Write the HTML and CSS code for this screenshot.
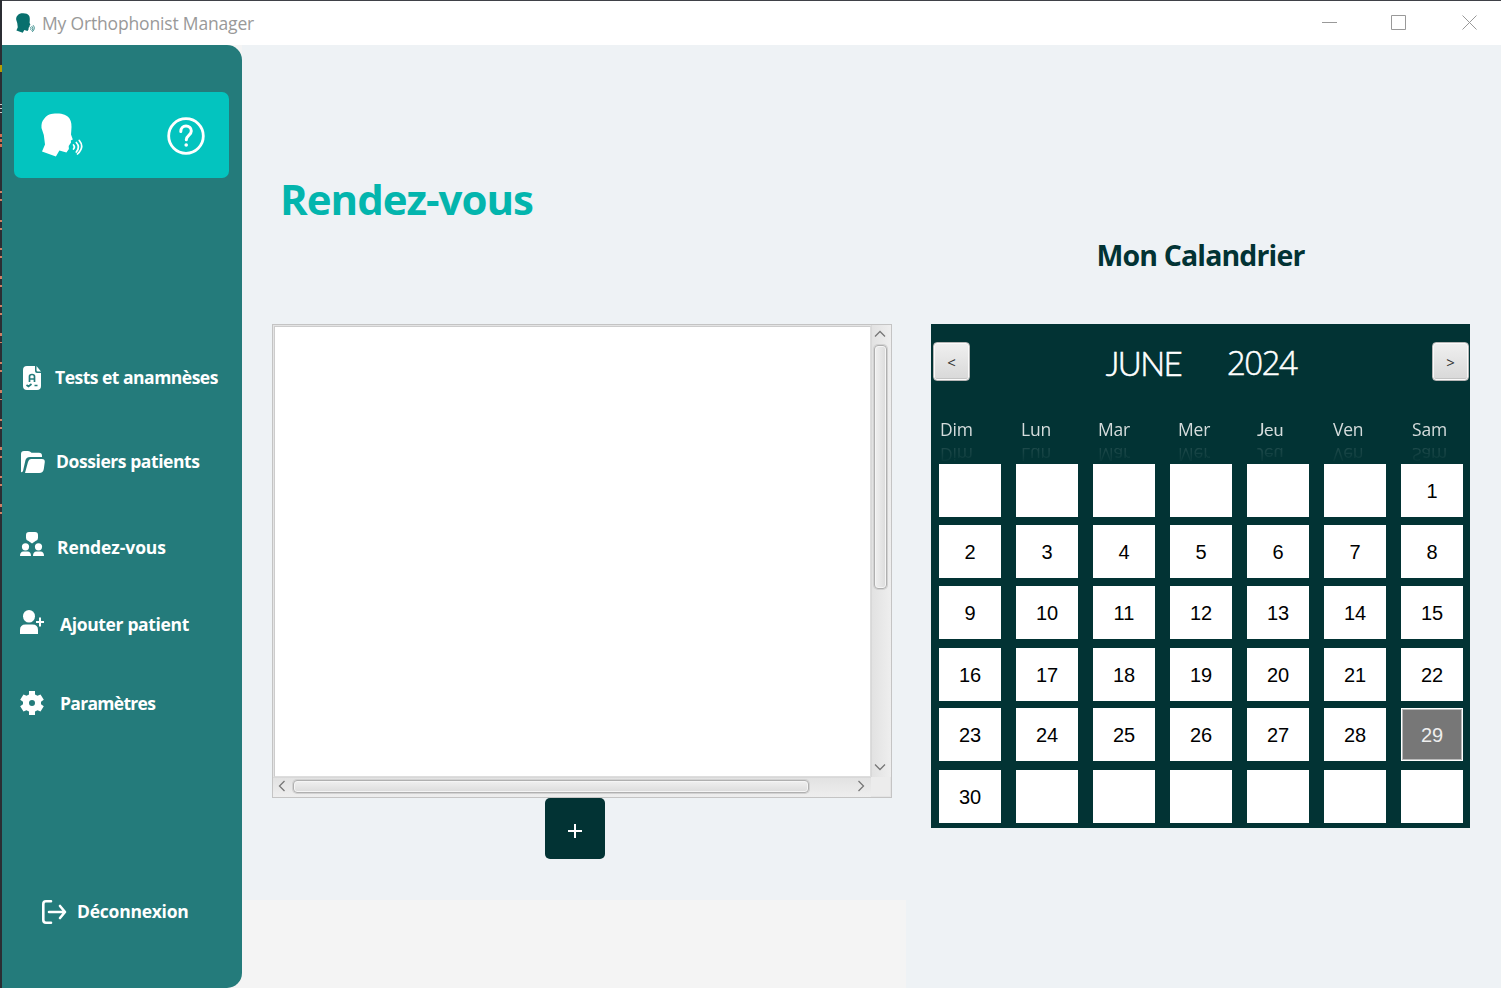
FILE: index.html
```html
<!DOCTYPE html>
<html lang="fr">
<head>
<meta charset="utf-8">
<title>My Orthophonist Manager</title>
<link rel="stylesheet" href="styles.css">
</head>
<body>
<svg class="defs" width="0" height="0" aria-hidden="true">
  <symbol id="head" viewBox="0 0 42 44">
    <path fill="currentColor" d="M3 6C6 1.500 10 .5 16 .5c6 0 10 1.500 12.500 5 2 3 2.300 7 1.800 12l-.3 4 1.800 5-2 1 .2 2-1.600 2.500-.7 1 .2 3-2.500 3.500-7-2-3.500 6L1 38.500l3-7L2.800 22 .5 15C.2 11 1 8 3 6z"/>
    <g fill="none" stroke="currentColor" stroke-width="1.700" stroke-linecap="round"><path d="M32.500 32q1.800 2 0 4"/><path d="M35.300 29.500q4.200 4.500 0 9.500"/><path d="M38.300 27.500q5.600 6.500 -1.800 13.500"/></g>
  </symbol>
</svg>
<div class="desktop-edge"><i></i><i></i><i></i><i></i></div>
<div class="window">
  <header class="titlebar">
    <svg class="app-icon"><use href="#head"/></svg>
    <span class="app-name">My Orthophonist Manager</span>
    <svg class="controls" width="156" height="16" viewBox="0 0 156 16" fill="none" stroke="#999"><path d="M0 7.500h15M69.500.5h14v14h-14z"/><path d="M140.500.5l14 14M154.500.5l-14 14"/></svg>
  </header>
  <div class="body">
    <nav class="sidebar">
      <div class="brand">
        <svg class="brand-head"><use href="#head"/></svg>
        <svg class="help" viewBox="0 0 38 38" fill="none" stroke="#fff" stroke-linecap="round"><circle cx="19" cy="19" r="17.300" stroke-width="2.800"/><path stroke-width="3" d="M13.800 14.500c0-3.300 2.200-5.500 5.200-5.500s5.300 2.200 5.300 5c0 4.500-5 4.300-5 8.800"/><circle cx="19.200" cy="28" r="1.800" fill="#fff" stroke="none"/></svg>
      </div>
      <a class="item tests"><svg viewBox="0 0 24 24"><path fill="#fff" d="M7 0h8v5q0 2 2 2h4v13q0 4-4 4H7q-4 0-4-4V4q0-4 4-4zM16.500 0L21 5.500h-3q-1.500 0-1.500-1.500z"/><path fill="none" stroke="#247b7b" stroke-width="1.700" d="M9.500 16v-5.500q0-2 2.500-2t2.500 2V16M9.500 13h5M6.500 19l2 1.500 3-2.500M14.500 19.500h3"/></svg><span>Tests et anamnèses</span></a>
      <a class="item files"><svg viewBox="0 0 24 24"><path fill="#fff" d="M1 22V4q0-3 3-3h4q2 0 3.500 1.800H19q3 0 3 3V7H10Q6.500 7 5.500 10L3 21q-.5 1.500-2 1z"/><path fill="#fff" d="M11 9h11q3 0 2.800 3l-1 7q-.6 4-4.500 4H5l3-11q.8-3 3-3z"/></svg><span>Dossiers patients</span></a>
      <a class="item meets"><svg viewBox="0 0 24 24" fill="#fff"><path d="M9 0h6q3 0 3 3v3q0 2.500-2.500 3L12 11.500 8.500 9Q6 8.500 6 6V3q0-3 3-3z"/><circle cx="5.500" cy="14.800" r="3.600"/><circle cx="18.500" cy="14.800" r="3.600"/><path d="M0 24q0-4.500 3.500-4.500h4Q11 19.500 11 24zM13 24q0-4.500 3.500-4.500h4Q24 19.500 24 24z"/></svg><span>Rendez-vous</span></a>
      <a class="item add"><svg viewBox="0 0 24 24" fill="#fff"><ellipse cx="9" cy="6.300" rx="6" ry="6.300"/><path d="M0 24v-4q0-5.500 5.500-5.500h7Q18 14.500 18 20v4zM19 7.500h2V11h3v2h-3v3.500h-2V13h-3v-2h3z"/></svg><span>Ajouter patient</span></a>
      <a class="item settings"><svg viewBox="0 0 24 24"><path fill="#fff" fill-rule="evenodd" d="M9 0h6v3.500l2.500 1.300 3-1.300 3.300 5.200L21 10.800v2.400l2.800 2.100-3.300 5.200-3-1.300L15 20.500V24H9v-3.500l-2.500-1.300-3 1.300-3.300-5.200L3 13.200v-2.400L.2 8.700l3.300-5.200 3 1.300L9 3.500zM12 9a3 3 0 1 0 0 6 3 3 0 0 0 0-6z"/></svg><span>Paramètres</span></a>
      <a class="item logout"><svg viewBox="0 0 24 24" fill="none" stroke="#fff" stroke-width="2.600" stroke-linecap="round" stroke-linejoin="round"><path d="M9 1.300H4Q1.300 1.300 1.300 4v16q0 2.700 2.700 2.700h5"/><path stroke-width="2.600" d="M7 12h15.500M18 6l5 6-5 6"/></svg><span>Déconnexion</span></a>
    </nav>
    <main class="main">
      <section class="agenda">
        <div class="agenda-top">
          <h1><span>Rendez-vous</span></h1>
          <div class="list">
            <div class="view"></div>
            <div class="vbar"><svg viewBox="0 0 12 8"><path d="M1 6.500L6 1.500l5 5"/></svg><div class="thumb"></div><svg class="end" viewBox="0 0 12 8"><path d="M1 1.500l5 5 5-5"/></svg></div>
            <div class="hbar"><svg viewBox="0 0 8 12"><path d="M6.500 1L1.500 6l5 5"/></svg><div class="thumb"></div><svg class="end" viewBox="0 0 8 12"><path d="M1.500 1l5 5-5 5"/></svg></div>
            <div class="corner"></div>
          </div>
          <button class="plus"><svg width="14" height="14" viewBox="0 0 14 14"><path fill="#fff" d="M6 0h2v6h6v2H8v6H6V8H0V6h6z"/></svg></button>
        </div>
      </section>
      <section class="calendar-side">
        <h2><span>Mon Calandrier</span></h2>
        <div class="calendar">
          <div class="cal-head"><button>&lt;</button><p><span class="month">JUNE</span><span class="year">2024</span></p><button>&gt;</button></div>
          <div class="days"><span>Dim</span><span>Lun</span><span>Mar</span><span>Mer</span><span>Jeu</span><span>Ven</span><span>Sam</span></div>
          <div class="grid">
            <b></b><b></b><b></b><b></b><b></b><b></b><b>1</b>
            <b>2</b><b>3</b><b>4</b><b>5</b><b>6</b><b>7</b><b>8</b>
            <b>9</b><b>10</b><b>11</b><b>12</b><b>13</b><b>14</b><b>15</b>
            <b>16</b><b>17</b><b>18</b><b>19</b><b>20</b><b>21</b><b>22</b>
            <b>23</b><b>24</b><b>25</b><b>26</b><b>27</b><b>28</b><b class="today">29</b>
            <b>30</b><b></b><b></b><b></b><b></b><b></b><b></b>
          </div>
        </div>
      </section>
    </main>
  </div>
</div>
</body>
</html>
```
FILE: styles.css
```css
* { box-sizing: border-box; }
body { margin: 0; width: 1501px; height: 988px; display: flex; overflow: hidden; font-family: "Open Sans", "Noto Sans", sans-serif; background: #eef2f5; }
.defs { position: absolute; }
.desktop-edge { width: 2px; flex: none; background: #2b2d33; display: flex; flex-direction: column; }
.desktop-edge i { flex: none; width: 2px; }
.desktop-edge i:nth-child(1) { height: 7px; margin-top: 65px; background: #b89b00; }
.desktop-edge i:nth-child(2) { height: 12px; margin-top: 32px; background: repeating-linear-gradient(#c8c8c8 0 1px, #2b2d33 1px 4px); }
.desktop-edge i:nth-child(3) { height: 14px; margin-top: 18px; background: repeating-linear-gradient(#cf6f51 0 3px, #2b2d33 3px 5px); }
.desktop-edge i:nth-child(4) { height: 330px; margin-top: 43px; background: repeating-linear-gradient(#cf7f64 0 2px, #2b2d33 2px 8px, #cf7f64 8px 10px, #2b2d33 10px 28.500px); }
.window { flex: 1; display: flex; flex-direction: column; }
.titlebar { height: 45px; flex: none; background: #fff; border-top: 1px solid #3f4147; display: flex; align-items: center; padding: 0 23px 0 13px; color: #999; }
.app-icon { width: 21px; height: 20px; margin-top: -1px; color: #08706e; }
.app-name { font-size: 17.500px; letter-spacing: -.17px; margin-left: 6px; white-space: nowrap; }
.controls { margin-left: auto; margin-top: -1px; }
.body { flex: 1; display: flex; background: #f4f4f4; }
.sidebar { width: 240px; flex: none; background: #247b7b; border-radius: 0 15px 15px 0; display: flex; flex-direction: column; }
.brand { width: 215px; height: 86px; margin: 46.500px 0 185.500px 12px; flex: none; border-radius: 7px; background: #03c4bf; display: flex; align-items: center; padding: 0 24.500px 0 27px; }
.brand-head { width: 42px; height: 44px; color: #fff; }
.help { width: 38px; height: 38px; margin-left: auto; margin-top: 2px; }
.item { display: flex; align-items: center; height: 30px; flex: none; padding-left: 18px; color: #fff; font-weight: 700; font-size: 17.500px; line-height: 30px; white-space: nowrap; }
.item svg { width: 24px; height: 24px; flex: none; overflow: visible; }
.tests span { margin-left: 11px; margin-top: -2px; letter-spacing: -.5px; }
.files { margin-top: 54px; } .files span { margin-left: 12px; margin-top: -2px; letter-spacing: -.43px; }
.meets { margin-top: 55px; } .meets svg { margin-top: -6px; } .meets span { margin-left: 13px; letter-spacing: -.1px; }
.add { margin-top: 47px; } .add svg { margin-top: -4px; } .add span { margin-left: 16px; letter-spacing: -.35px; }
.settings { margin-top: 49px; } .settings span { margin-left: 16px; letter-spacing: -.7px; }
.logout { margin-top: 179px; padding-left: 40px; } .logout span { margin-left: 11px; margin-top: -2px; letter-spacing: -.25px; }
.main { flex: 1; display: grid; grid-template-columns: 664px 1fr; }
.agenda-top { height: 855px; background: #eef2f5; padding: 127px 0 0 30px; display: flex; flex-direction: column; align-items: flex-start; }
h1 { margin: 0 0 98px 8px; font-size: 42px; letter-spacing: -1px; line-height: 54px; color: #03b5ad; white-space: nowrap; }
.list { width: 620px; height: 474px; flex: none; border: 1px solid #c4c4c4; box-shadow: inset 0 0 0 1px #e4e4e4; display: grid; grid-template: 452px 20px / 598px 20px; background: #ececec; }
.view { background: #fff; border: 1px solid #ccc; border-right-color: #ddd; border-bottom-color: #ddd; margin-left: 1px; margin-top: 1px; }
.vbar, .hbar { display: flex; align-items: center; }
.vbar { flex-direction: column; border-left: 1px solid #d8d8d8; background: linear-gradient(90deg, #e2e2e2, #eee); padding: 5px 4px 6px 0; }
.vbar svg { width: 12px; height: 8px; } .hbar svg { width: 8px; height: 12px; }
.list path { fill: none; stroke: #777; stroke-width: 1.300; }
.thumb { border: 1px solid #b0b0b0; border-radius: 4px; box-shadow: inset 0 0 0 1px #f5f5f5, 0 0 0 1px #d2d2d2; }
.vbar .thumb { width: 13px; height: 244px; margin-top: 7px; margin-left: 1px; background: linear-gradient(90deg, #f0f0f0, #dcdcdc); }
.vbar .end { margin-top: auto; }
.hbar { border-top: 1px solid #d8d8d8; background: linear-gradient(#e2e2e2, #eee); padding: 0 6px 4px 5px; }
.hbar .thumb { width: 516px; height: 13px; margin-left: 7px; margin-top: 2px; background: linear-gradient(#f0f0f0, #dcdcdc); }
.hbar .end { margin-left: auto; }
.plus { width: 60px; height: 61.400px; flex: none; margin-left: 273px; padding: 7px 0 0; border: 0; border-radius: 5px; background: #023334; }
.calendar-side { background: #eef2f5; padding: 190px 0 0 25px; }
h2 { width: 539px; margin: 0 0 49px; text-align: center; font-size: 28.500px; letter-spacing: -.87px; line-height: 40px; color: #023334; white-space: nowrap; }
.calendar { width: 539px; height: 504px; background: #023334; }
.cal-head { height: 90px; padding: 18px 1px 0 2px; display: flex; justify-content: space-between; }
.cal-head button { width: 37px; height: 39px; padding: 0; border: 1px solid #b5b5b5; border-radius: 4px; background: linear-gradient(#f0f0f0, #d8d8d8); box-shadow: inset 0 0 0 1px #fafafa, inset 0 -2px 0 #c4c4c4; font: 15px "Open Sans", sans-serif; color: #333; }
.cal-head p { margin: 0; font-size: 33px; line-height: 42px; color: #fff; display: flex; gap: 46px; }
.month { font-family: Lato, "Open Sans", sans-serif; font-weight: 300; letter-spacing: -1.600px; -webkit-text-stroke: .6px #fff; }
.year { font-weight: 300; letter-spacing: -1.500px; -webkit-text-stroke: .5px #fff; }
.days { height: 50px; padding: 4px 0 0 9px; display: flex; color: #d5dcdc; font-size: 17.500px; line-height: 22px; }
.days span { height: 24px; white-space: nowrap; letter-spacing: -.2px; -webkit-box-reflect: below 0 linear-gradient(transparent, rgba(0,0,0,.03) 20%, rgba(0,0,0,.18)); }
.days span:nth-child(1) { width: 81px; } .days span:nth-child(2) { width: 77px; } .days span:nth-child(3) { width: 80px; } .days span:nth-child(4) { width: 79px; } .days span:nth-child(5) { width: 76px; font-family: Lato, "Open Sans", sans-serif; font-size: 18px; line-height: 23px; } .days span:nth-child(6) { width: 79px; }
.grid { padding-left: 8px; display: grid; grid-template-columns: repeat(7, 62px); grid-template-rows: 61px 61px 62px 60px 62px 53px; column-gap: 15px; }
.grid b { height: 53px; background: #fff; display: flex; align-items: center; justify-content: center; font: 20px "Liberation Sans", Arial, sans-serif; color: #000; padding-top: 1px; }
.grid .today { background: #777; border: 1px solid #fff; box-shadow: inset 0 0 0 1px #bbb; color: #eee; }
```
